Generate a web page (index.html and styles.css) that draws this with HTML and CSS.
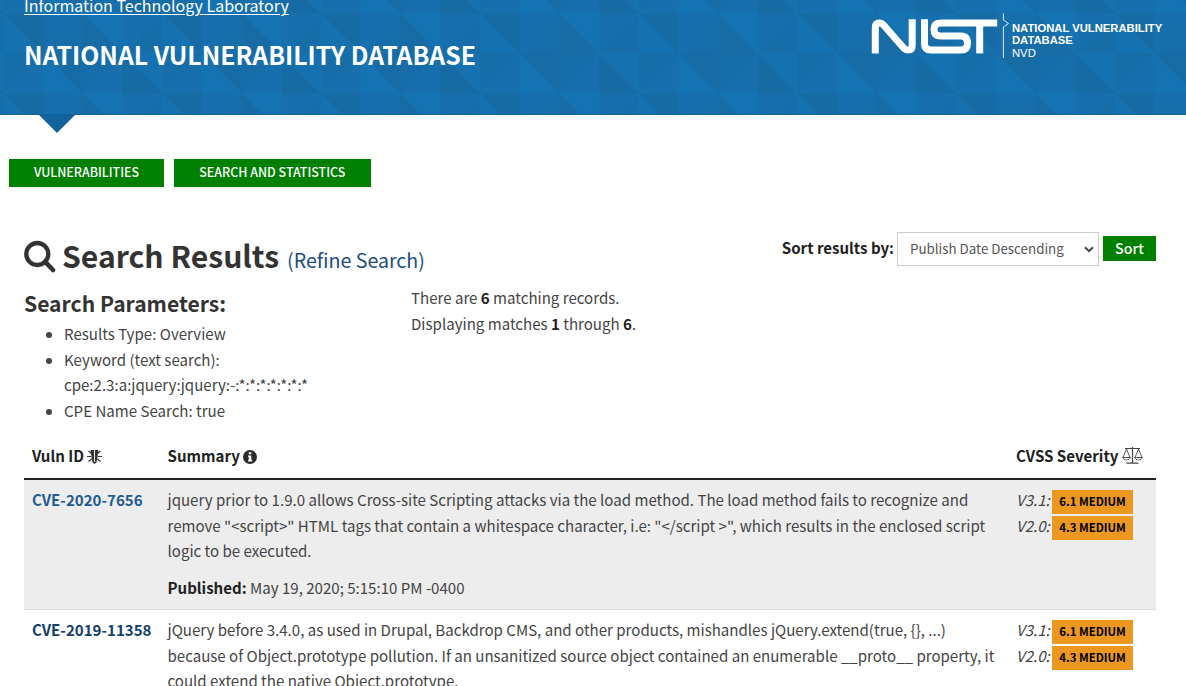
FILE: index.html
```html
<!DOCTYPE html>
<html lang="en">
<head>
<meta charset="utf-8">
<title>NVD - Results</title>
<link rel="stylesheet" href="styles.css">
</head>
<body>
<header class="site-header">
  <svg class="facets" width="1186" height="115" aria-hidden="true">
    <defs>
      <pattern id="facet" width="158.8" height="80" x="519.6" y="13.3" patternUnits="userSpaceOnUse">
        <rect width="159" height="80" fill="#176fad"/>
        <path d="M0 40L39.7 0V40Z" fill="#176eaa"/>
        <path d="M79.4 40L119.1 0V40Z" fill="#166da8"/>
        <path d="M39.7 40H79.400L39.7 80Z" fill="#176da9"/>
        <path d="M119.1 40H158.8L119.1 80Z" fill="#166da8"/>
        <path d="M39.7 0H79.4V40Z" fill="#1573b4"/>
        <path d="M39.7 0V40H79.4Z" fill="#176ca6"/>
        <path d="M119.1 0V40H158.8Z" fill="#1571b0"/>
        <path d="M119.1 0H158.8V40Z" fill="#176ba5"/>
        <path d="M0 40V80H39.7Z" fill="#1573b4"/>
        <path d="M0 40H39.7V80Z" fill="#176ca6"/>
        <path d="M79.4 40V80H119.1Z" fill="#176ba5"/>
        <path d="M79.4 40H119.1V80Z" fill="#1571b0"/>
      </pattern>
    </defs>
    <rect width="1186" height="115" fill="url(#facet)"/>
    <rect y="114" width="1186" height="1" fill="#0f619b"/>
  </svg>
  <div class="brand">
    <a class="lab">Information Technology Laboratory</a>
    <h1 class="site-title">NATIONAL VULNERABILITY DATABASE</h1>
  </div>
  <div class="logo">
    <svg width="152" height="60" viewBox="0 0 152 60" fill="none" stroke="#fff" stroke-width="7" aria-hidden="true">
      <path d="M15.300 53.400V27.500Q15.300 23 19.500 23Q22 23 24 25.500L43.500 47.800Q45.500 50 48 50Q52.200 50 52.200 45.500V19.300"/>
      <path d="M64.500 19.300V43.500Q64.500 50 71 50H101Q107.500 50 107.500 43.500Q107.500 36 101 36H80.500Q74 36 74 29.500Q74 23 80.500 23H137.200"/>
      <path d="M119.700 23V53.400"/>
      <path d="M143.400 13.300V20L148.500 23.500L143.400 27V58" stroke-width="1" stroke-opacity=".85"/>
    </svg>
    <div class="logo-text"><b>NATIONAL VULNERABILITY<br>DATABASE</b><br>NVD</div>
  </div>
  <span class="caret"></span>
</header>
<nav class="menu">
  <a class="menu-btn menu-vuln">VULNERABILITIES</a>
  <a class="menu-btn menu-search">SEARCH AND STATISTICS</a>
</nav>
<main class="content">
  <div class="title-row">
    <h2 class="page-title">
      <svg class="search-icon" width="32" height="33" viewBox="0 0 32 33" fill="none" stroke="#333" aria-hidden="true"><circle cx="13.300" cy="14" r="11" stroke-width="4.300"/><path d="M21 21.700L29 30" stroke-width="4.600" stroke-linecap="round"/></svg>
      <span>Search Results</span>
      <a class="refine">(Refine Search)</a>
    </h2>
    <div class="sorter">
      <label class="sort-label">Sort results by:</label>
      <div class="select">Publish Date Descending
        <svg width="10" height="7" viewBox="0 0 10 7" fill="none" stroke="#444" stroke-width="2" aria-hidden="true"><path d="M1 1.200L5 5.200L9 1.200"/></svg>
      </div>
      <button class="sort-btn">Sort</button>
    </div>
  </div>
  <div class="info">
    <section class="params">
      <h3 class="params-title">Search Parameters:</h3>
      <ul class="param-list">
        <li>Results Type: Overview</li>
        <li>Keyword (text search):<br>cpe:2.3:a:jquery:jquery:-:*:*:*:*:*:*:*</li>
        <li>CPE Name Search: true</li>
      </ul>
    </section>
    <p class="counts">There are <b>6</b> matching records.<br>Displaying matches <b>1</b> through <b>6</b>.</p>
  </div>
  <div class="results">
    <div class="row head">
      <div>Vuln ID <svg class="bug" width="15" height="15" viewBox="0 0 15 15" fill="#333" stroke="#333" aria-hidden="true"><path d="M3.500 1H7V12.500H5.500Q4.500 11 4.500 8ZM11.500 1H8V12.500H9.500Q10.500 11 10.500 8Z" stroke="none"/><path d="M4.500 12.500H10.500L7.500 15Z" stroke="none"/><path d="M1.500 2L4.500 4.500M13.500 2L10.500 4.500M0 7.500H4M11 7.500H15M1.500 12.500L4.500 10M13.500 12.500L10.500 10" fill="none" stroke-width="1.100"/></svg></div>
      <div>Summary <svg class="info-icon" width="14" height="14" viewBox="0 0 14 14" aria-hidden="true"><circle cx="7" cy="7" r="7" fill="#2b2b2b"/><path d="M5.800 2.200H8.300V4.300H5.800ZM5 5.500H8.300V9.800H9.200V11.500H5V9.800H5.900V7.200H5Z" fill="#fff"/></svg></div>
      <div>CVSS Severity <svg class="scale" width="21" height="17" viewBox="0 0 21 17" fill="none" stroke="#444" aria-hidden="true"><path d="M3 1.500H18M10.500 0V16M4.500 16.200H16.500" stroke-width="1.200"/><path d="M4.500 2L1 10.500H8ZM16.500 2L13 10.500H20Z" stroke-width=".9"/><path d="M.500 10.500H8.500Q7.500 13 4.500 13T.500 10.500ZM12.500 10.500H20.500Q19.500 13 16.500 13T12.500 10.500Z" stroke-width=".8"/></svg></div>
    </div>
    <div class="row shaded">
      <div><a class="cve">CVE-2020-7656</a></div>
      <div>
        <p class="summary">jquery prior to 1.9.0 allows Cross-site Scripting attacks via the load method. The load method fails to recognize and<br>remove "&lt;script&gt;" HTML tags that contain a whitespace character, i.e: "&lt;/script &gt;", which results in the enclosed script<br>logic to be executed.</p>
        <p class="published"><b>Published:</b> May 19, 2020; 5:15:10 PM -0400</p>
      </div>
      <div class="scores">
        <div class="score"><i>V3.1:</i><span class="badge">6.1 MEDIUM</span></div>
        <div class="score"><i>V2.0:</i><span class="badge">4.3 MEDIUM</span></div>
      </div>
    </div>
    <div class="row">
      <div><a class="cve dark">CVE-2019-11358</a></div>
      <div>
        <p class="summary">jQuery before 3.4.0, as used in Drupal, Backdrop CMS, and other products, mishandles jQuery.extend(true, {}, ...)<br>because of Object.prototype pollution. If an unsanitized source object contained an enumerable __proto__ property, it<br>could extend the native Object.prototype.</p>
      </div>
      <div class="scores">
        <div class="score"><i>V3.1:</i><span class="badge">6.1 MEDIUM</span></div>
        <div class="score"><i>V2.0:</i><span class="badge">4.3 MEDIUM</span></div>
      </div>
    </div>
  </div>
</main>
</body>
</html>
```
FILE: styles.css
```css
*{box-sizing:border-box}
html{height:686px;overflow:hidden}
body{margin:0;height:686px;overflow:hidden;background:#fff;color:#444;font:15.07px/25.5px "Noto Sans CJK SC",sans-serif}
h1,h2,h3,p,ul{margin:0;padding:0}
b{color:#212121}
.site-header{position:relative;height:115px;display:flex;justify-content:space-between;color:#fff}
.facets{position:absolute;inset:0}
.brand{position:relative;padding-left:24px}
.lab{display:block;margin-top:-8px;font-size:16px;line-height:26px;text-decoration:underline;text-underline-offset:2px;text-decoration-thickness:1px}
.site-title{font-size:24.8px;line-height:36px;margin-top:18px}
.logo{position:relative;display:flex;width:326px}
.logo-text{margin:22px 0 0 0;font:11.25px/12.3px "Liberation Sans",Arial,sans-serif;white-space:nowrap}
.logo-text b{color:#fff}
.caret{position:absolute;left:39px;top:115px;width:36px;height:18px;background:#12639b;clip-path:polygon(0 0,100% 0,50% 100%)}
.menu{display:flex;gap:10px;padding:44px 0 0 9px}
.menu-btn{height:28px;background:#008000;color:#fff;font-size:12.45px;font-weight:500;line-height:26px;text-align:center}
.menu-vuln{width:155px}
.menu-search{width:196.5px}
.content{padding:45px 30px 0 24px}
.title-row{display:flex;justify-content:space-between;height:54px}
.page-title{display:flex;align-items:baseline;color:#333;font-size:30.15px;line-height:47px}
.search-icon{margin-right:6px;align-self:flex-start;margin-top:8px}
.refine{margin-left:8px;font-size:19.6px;font-weight:400;color:#1c4e7e}
.sorter{display:flex;align-items:flex-start}
.sort-label{margin:3px 3px 0 0;font-weight:700;color:#212121}
.select{display:flex;align-items:center;justify-content:space-between;width:202px;height:34px;padding:0 4px 0 12px;border:1px solid #ccc;font-size:13.35px;color:#555}
.sort-btn{width:53px;height:25px;margin:4px 0 0 4px;padding:0;border:0;background:#008000;color:#fff;font:500 14.2px/21px "Noto Sans CJK SC",sans-serif}
.info{display:flex;height:150px}
.params{width:387px}
.params-title{font-size:21.1px;line-height:34px;color:#333}
.param-list{padding:1.2px 0 0 40px}
.counts{margin-top:-1px}
.row{display:grid;grid-template-columns:135.500px 848.500px 1fr;padding:7px 0 0 8px;border-bottom:1px solid #ddd}
.row.head{height:44px;padding-top:7px;border-bottom:2px solid #222;color:#212121;font-weight:700}
.row svg{vertical-align:-2px}
.shaded{height:130px;background:#ededed}
.summary{white-space:nowrap}
.published{margin-top:11.5px}
.cve{font-weight:700;color:#205c90}
.cve.dark{color:#12406b}
.score{display:flex;height:25.5px}
.score i{width:36px}
.badge{width:81px;height:24px;margin-top:3px;background:#ec971f;color:#000;font-size:11.4px;font-weight:700;line-height:22px;text-align:center}
```
